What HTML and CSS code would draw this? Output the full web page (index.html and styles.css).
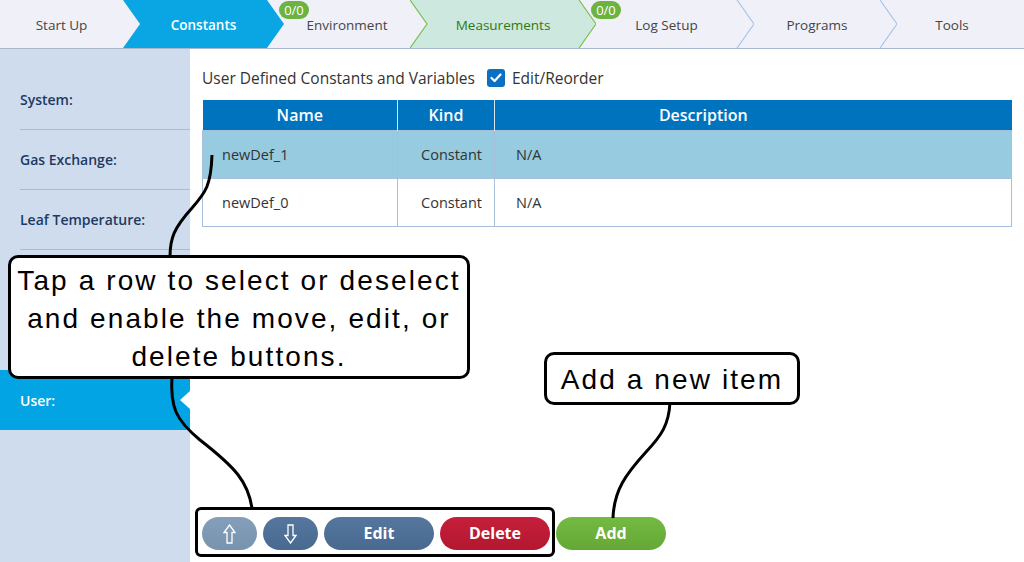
FILE: index.html
```html
<!DOCTYPE html>
<html>
<head>
<meta charset="utf-8">
<link rel="stylesheet" href="styles.css">
</head>
<body>
<div class="app">
  <nav class="crumbs">
    <div class="crumb c-startup"><span class="label">Start Up</span></div>
    <div class="crumb c-constants active">
      <svg class="shape" width="161" height="48" viewBox="0 0 161 48"><polygon points="0,0 144,0 161,24 144,48 0,48 17,24" fill="#0aa6e3"/></svg>
      <span class="label">Constants</span>
    </div>
    <div class="crumb c-env">
      <span class="badge">0/0</span>
      <span class="label">Environment</span>
    </div>
    <div class="crumb c-meas done">
      <svg class="shape" width="186" height="48" viewBox="0 0 186 48"><polygon points="0,0 169,0 186,24 169,48 0,48 17,24" fill="#cde8de"/><polyline points="0,0 17,24 0,48" fill="none" stroke="#7cc04c" stroke-width="1.2"/><polyline points="169,0 186,24 169,48" fill="none" stroke="#7cc04c" stroke-width="1.2"/></svg>
      <span class="label">Measurements</span>
    </div>
    <div class="crumb c-log">
      <svg class="shape" width="175" height="48" viewBox="0 0 175 48"><polyline points="158,0 175,24 158,48" fill="none" stroke="#a9c5e6" stroke-width="1.2"/></svg>
      <span class="badge">0/0</span>
      <span class="label">Log Setup</span>
    </div>
    <div class="crumb c-prog">
      <svg class="shape" width="160" height="48" viewBox="0 0 160 48"><polyline points="143,0 160,24 143,48" fill="none" stroke="#a9c5e6" stroke-width="1.2"/></svg>
      <span class="label">Programs</span>
    </div>
    <div class="crumb c-tools"><span class="label">Tools</span></div>
  </nav>

  <div class="content">
    <aside class="side">
      <div class="side-item">System:</div>
      <div class="side-item">Gas Exchange:</div>
      <div class="side-item">Leaf Temperature:</div>
      <div class="side-item"></div>
      <div class="side-item"></div>
      <div class="side-item active">User:</div>
    </aside>

    <main class="main">
      <div class="title-row">
        <span class="title">User Defined Constants and Variables</span>
        <span class="check">
          <span class="box"><svg width="12" height="10" viewBox="0 0 12 10"><polyline points="1.5,5 4.6,8 10.5,1.5" fill="none" stroke="#fff" stroke-width="2.2" stroke-linecap="round" stroke-linejoin="round"/></svg></span>
          <span>Edit/Reorder</span>
        </span>
      </div>

      <table class="grid">
        <thead>
          <tr><th class="col-name">Name</th><th class="col-kind">Kind</th><th class="col-desc">Description</th></tr>
        </thead>
        <tbody>
          <tr class="selected"><td class="name">newDef_1</td><td class="kind">Constant</td><td class="desc">N/A</td></tr>
          <tr><td class="name">newDef_0</td><td class="kind">Constant</td><td class="desc">N/A</td></tr>
        </tbody>
      </table>

      <div class="actions">
        <button class="btn btn-up" disabled><svg width="13" height="20" viewBox="0 0 13 20"><polygon points="6.5,1 12,8.5 9,8.5 9,19 4,19 4,8.5 1,8.5" fill="none" stroke="#fff" stroke-width="1.3" stroke-linejoin="miter"/></svg></button>
        <button class="btn btn-down"><svg width="13" height="20" viewBox="0 0 13 20"><polygon points="6.5,19 12,11.5 9,11.5 9,1 4,1 4,11.5 1,11.5" fill="none" stroke="#fff" stroke-width="1.3" stroke-linejoin="miter"/></svg></button>
        <button class="btn btn-edit"><span>Edit</span></button>
        <button class="btn btn-delete"><span>Delete</span></button>
        <button class="btn btn-add"><span>Add</span></button>
      </div>
    </main>
  </div>

  <svg class="connectors" width="1024" height="562" viewBox="0 0 1024 562">
    <path d="M212,155 C211,185 206,192 192,208 C174,228 170,238 170,257" fill="none" stroke="#000" stroke-width="3"/>
    <path d="M172,376 C170,408 176,420 200,440 C236,468 248,482 252,508" fill="none" stroke="#000" stroke-width="3"/>
    <path d="M670,402 C669,425 661,436 646,452 C626,474 614,490 613,518" fill="none" stroke="#000" stroke-width="3"/>
  </svg>

  <div class="callout callout-tap"><p class="callout-text">Tap a row to select or deselect<br>and enable the move, edit, or<br>delete buttons.</p></div>
  <div class="callout callout-add"><p class="callout-text">Add a new item</p></div>
  <div class="bracket"></div>
</div>
</body>
</html>
```

FILE: styles.css
```css
* { box-sizing: border-box; }
html, body { margin: 0; padding: 0; }
body {
  width: 1024px;
  height: 562px;
  overflow: hidden;
  background: #fff;
  font-family: "Open Sans", "Noto Sans", sans-serif;
  color: #333;
}
.app {
  position: relative;
  width: 1024px;
  height: 562px;
  display: flex;
  flex-direction: column;
}

/* ---------- breadcrumb nav ---------- */
.crumbs {
  height: 49px;
  flex: none;
  display: flex;
  background: #eff0f8;
  border-bottom: 1px solid #a7b8cd;
  overflow: hidden;
}
.crumb {
  position: relative;
  flex: none;
  height: 48px;
  margin-right: -17px;
  padding: 2px 17px 0 17px;
  display: flex;
  align-items: center;
  justify-content: center;
  font-size: 13.5px;
  color: #454545;
}
.crumb .shape {
  position: absolute;
  left: 0;
  top: 0;
}
.crumb .label { position: relative; }
.c-startup { width: 140px; padding-left: 0; }
.c-constants { width: 161px; }
.c-env { width: 160px; }
.c-meas { width: 186px; }
.c-log { width: 175px; }
.c-prog { width: 160px; }
.c-tools { width: 144px; padding-left: 0; padding-right: 0; margin-right: 0; }
.crumb.active { color: #fff; font-weight: 600; }
.crumb.done { color: #2c7a14; }
.badge {
  position: absolute;
  left: 12px;
  top: 1px;
  width: 30px;
  height: 18px;
  border-radius: 9px;
  background: #6cb33f;
  color: #fff;
  font-size: 13px;
  line-height: 18px;
  text-align: center;
  z-index: 2;
}

/* ---------- content ---------- */
.content {
  flex: 1;
  display: flex;
  min-height: 0;
}
.side {
  width: 190px;
  flex: none;
  background: #cfdcee;
  padding-top: 21px;
  display: flex;
  flex-direction: column;
}
.side-item {
  position: relative;
  height: 60px;
  margin-left: 20px;
  border-bottom: 1px solid #a6bbd6;
  display: flex;
  align-items: center;
  font-size: 14px;
  font-weight: 600;
  color: #1e3a62;
}
.side-item.active {
  margin-left: 0;
  padding-left: 20px;
  border-bottom: none;
  background: #02a4e3;
  color: #fff;
}
.side-item.active::after {
  content: "";
  position: absolute;
  right: 0;
  top: 21px;
  border-right: 10px solid #fff;
  border-top: 9px solid transparent;
  border-bottom: 9px solid transparent;
}

.main {
  flex: 1;
  display: flex;
  flex-direction: column;
  padding: 19px 12px 12px 12px;
}
.title-row {
  height: 20px;
  display: flex;
  align-items: center;
  font-size: 15.5px;
  color: #333;
}
.check {
  display: flex;
  align-items: center;
  margin-left: 12px;
  gap: 7px;
}
.check .box {
  width: 18px;
  height: 18px;
  border-radius: 3px;
  background: #0b6fc4;
  display: flex;
  align-items: center;
  justify-content: center;
}

.grid {
  margin-top: 12px;
  width: 810px;
  border-collapse: collapse;
  table-layout: fixed;
  font-size: 14.5px;
}
.grid th {
  height: 30px;
  padding: 0;
  background: #0073be;
  color: #fff;
  font-size: 16px;
  font-weight: 600;
  text-align: center;
  border-left: 1px solid #d7e6f3;
}
.grid th:first-child { border-left: none; }
.grid th.col-desc { padding-right: 100px; }
.col-name { width: 195px; }
.col-kind { width: 97px; }
.grid td {
  height: 48px;
  padding: 0;
  border: 1px solid #a8bfdb;
  color: #333;
}
.grid tr.selected td { background: #96cbe0; }
.grid td.name { padding-left: 19px; }
.grid td.kind { text-align: right; padding-right: 12px; }
.grid td.desc { padding-left: 21px; }

.actions {
  margin-top: auto;
  display: flex;
  gap: 6px;
  height: 33px;
}
.btn {
  height: 33px;
  border: none;
  border-radius: 17px;
  padding: 0 0 2px 0;
  color: #fff;
  font-family: "Open Sans", "Noto Sans", sans-serif;
  font-size: 16px;
  font-weight: 700;
  display: flex;
  align-items: center;
  justify-content: center;
}
.btn-up, .btn-down { padding-bottom: 0; }
.btn-up { width: 55px; background: linear-gradient(#849fb9, #7893ad); }
.btn-down { width: 55px; background: linear-gradient(#55779d, #486a90); }
.btn-edit { width: 110px; background: linear-gradient(#55779d, #486a90); }
.btn-delete { width: 110px; background: linear-gradient(#c61e3b, #b3182f); }
.btn-add { width: 110px; background: linear-gradient(#74b941, #64a935); }

/* ---------- annotations ---------- */
.connectors {
  position: absolute;
  left: 0;
  top: 0;
  pointer-events: none;
}
.callout {
  position: absolute;
  background: #fff;
  border: 3px solid #000;
  border-radius: 10px;
  color: #000;
  font-family: "Liberation Sans", Arial, sans-serif;
  font-size: 28px;
  line-height: 38px;
  letter-spacing: 2.1px;
  text-align: center;
  display: flex;
  align-items: center;
  justify-content: center;
  padding-top: 3px;
}
.callout-text { margin: 0; }
.callout-tap {
  left: 8px;
  top: 255px;
  width: 462px;
  height: 124px;
}
.callout-add {
  left: 544px;
  top: 352px;
  width: 256px;
  height: 53px;
}
.bracket {
  position: absolute;
  left: 195px;
  top: 507px;
  width: 360px;
  height: 50px;
  border: 3px solid #000;
  border-radius: 6px;
}
```
